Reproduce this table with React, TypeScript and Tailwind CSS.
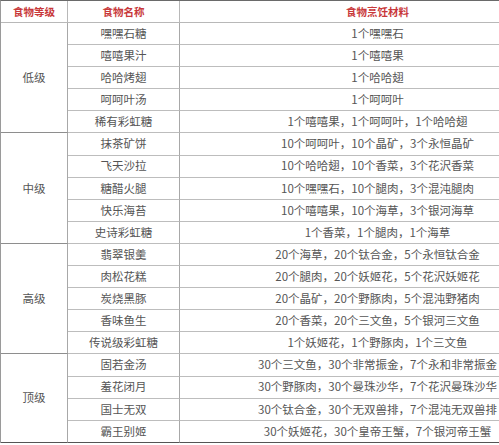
import * as React from "react";

type Food = { name: string; recipe: string };
type Tier = { level: string; foods: Food[] };

const tiers: Tier[] = [
  {
    level: "低级",
    foods: [
      { name: "嘿嘿石糖", recipe: "1个嘿嘿石" },
      { name: "嘻嘻果汁", recipe: "1个嘻嘻果" },
      { name: "哈哈烤翅", recipe: "1个哈哈翅" },
      { name: "呵呵叶汤", recipe: "1个呵呵叶" },
      { name: "稀有彩虹糖", recipe: "1个嘻嘻果，1个呵呵叶，1个哈哈翅" },
    ],
  },
  {
    level: "中级",
    foods: [
      { name: "抹茶矿饼", recipe: "10个呵呵叶，10个晶矿，3个永恒晶矿" },
      { name: "飞天沙拉", recipe: "10个哈哈翅，10个香菜，3个花沢香菜" },
      { name: "糖醋火腿", recipe: "10个嘿嘿石，10个腿肉，3个混沌腿肉" },
      { name: "快乐海苔", recipe: "10个嘻嘻果，10个海草，3个银河海草" },
      { name: "史诗彩虹糖", recipe: "1个香菜，1个腿肉，1个海草" },
    ],
  },
  {
    level: "高级",
    foods: [
      { name: "翡翠银羹", recipe: "20个海草，20个钛合金，5个永恒钛合金" },
      { name: "肉松花糕", recipe: "20个腿肉，20个妖姬花，5个花沢妖姬花" },
      { name: "炭烧黑豚", recipe: "20个晶矿，20个野豚肉，5个混沌野猪肉" },
      { name: "香味鱼生", recipe: "20个香菜，20个三文鱼，5个银河三文鱼" },
      { name: "传说级彩虹糖", recipe: "1个妖姬花，1个野豚肉，1个三文鱼" },
    ],
  },
  {
    level: "顶级",
    foods: [
      { name: "固若金汤", recipe: "30个三文鱼，30个非常振金，7个永和非常振金" },
      { name: "羞花闭月", recipe: "30个野豚肉，30个曼珠沙华，7个花沢曼珠沙华" },
      { name: "国士无双", recipe: "30个钛合金，30个无双兽排，7个混沌无双兽排" },
      { name: "霸王别姬", recipe: "30个妖姬花，30个皇帝王蟹，7个银河帝王蟹" },
    ],
  },
];

const spans: Record<number, string> = { 4: "row-span-4", 5: "row-span-5" };

export default function App(): React.ReactElement {
  return (
    <div className="h-[445px] w-[499px] overflow-hidden bg-white">
      <div
        className="grid w-[576px] grid-cols-[67px_112px_396px] grid-rows-[22px_repeat(19,22.1px)] border-t border-l border-t-[#6a6a6a] border-l-[#9a9a9a] text-[11.5px] text-[#555]"
        style={{ fontFamily: '"Noto Sans CJK SC", "Noto Sans", sans-serif' }}
      >
        {["食物等级", "食物名称", "食物烹饪材料"].map((h) => (
          <div
            key={h}
            className="flex items-center justify-center border-r border-b border-[#b8b8b8] text-[10.5px] font-bold text-[#c8383a]"
          >
            {h}
          </div>
        ))}

        {tiers.map((tier, ti) => {
          const last = ti === tiers.length - 1;
          return (
            <React.Fragment key={tier.level}>
              <div
                className={`${spans[tier.foods.length]} col-start-1 flex items-center justify-center border-r border-b border-r-[#a8a8a8] ${
                  last ? "border-b-[#555]" : "border-b-[#8e8e8e]"
                }`}
              >
                {tier.level}
              </div>
              {tier.foods.map((f, fi) => {
                const bottom = last && fi === tier.foods.length - 1;
                return (
                  <React.Fragment key={f.name}>
                    <div
                      className={`col-start-2 flex items-center justify-center border-r border-b border-r-[#a8a8a8] ${
                        bottom ? "border-b-[#555]" : "border-b-[#bdbdbd]"
                      }`}
                    >
                      {f.name}
                    </div>
                    <div
                      className={`col-start-3 flex items-center justify-center whitespace-nowrap border-r border-b border-r-[#a8a8a8] ${
                        bottom ? "border-b-[#555]" : "border-b-[#bdbdbd]"
                      }`}
                    >
                      {f.recipe}
                    </div>
                  </React.Fragment>
                );
              })}
            </React.Fragment>
          );
        })}
      </div>
    </div>
  );
}
